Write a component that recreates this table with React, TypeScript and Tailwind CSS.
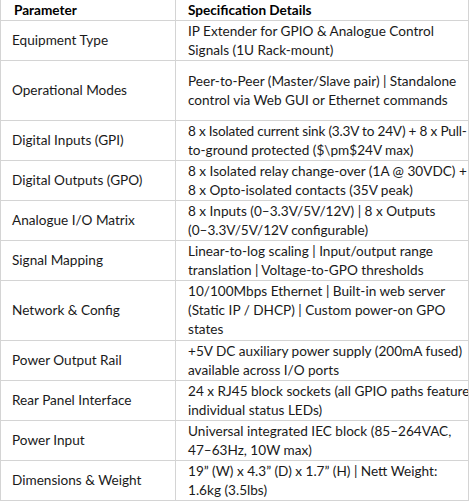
const rows: { name: string; lines: string[]; h: string }[] = [
  { name: "Equipment Type", lines: ["IP Extender for GPIO & Analogue Control", "Signals (1U Rack-mount)"], h: "h-[40px]" },
  { name: "Operational Modes", lines: ["Peer-to-Peer (Master/Slave pair) | Standalone", "control via Web GUI or Ethernet commands"], h: "h-[60px]" },
  { name: "Digital Inputs (GPI)", lines: ["8 x Isolated current sink (3.3V to 24V) + 8 x Pull-", "to-ground protected ($\\pm$24V max)"], h: "h-[40px]" },
  { name: "Digital Outputs (GPO)", lines: ["8 x Isolated relay change-over (1A @ 30VDC) +", "8 x Opto-isolated contacts (35V peak)"], h: "h-[40px]" },
  { name: "Analogue I/O Matrix", lines: ["8 x Inputs (0–3.3V/5V/12V) | 8 x Outputs", "(0–3.3V/5V/12V configurable)"], h: "h-[40px]" },
  { name: "Signal Mapping", lines: ["Linear-to-log scaling | Input/output range", "translation | Voltage-to-GPO thresholds"], h: "h-[40px]" },
  { name: "Network & Config", lines: ["10/100Mbps Ethernet | Built-in web server", "(Static IP / DHCP) | Custom power-on GPO", "states"], h: "h-[60px]" },
  { name: "Power Output Rail", lines: ["+5V DC auxiliary power supply (200mA fused)", "available across I/O ports"], h: "h-[40px]" },
  { name: "Rear Panel Interface", lines: ["24 x RJ45 block sockets (all GPIO paths feature", "individual status LEDs)"], h: "h-[40px]" },
  { name: "Power Input", lines: ["Universal integrated IEC block (85–264VAC,", "47–63Hz, 10W max)"], h: "h-[40px]" },
  { name: "Dimensions & Weight", lines: ["19” (W) x 4.3” (D) x 1.7” (H) | Nett Weight:", "1.6kg (3.5lbs)"], h: "h-[40px]" },
];

export default function App() {
  return (
    <div className="w-[469px] h-[501px] bg-white font-['Lato',sans-serif] text-[13.6px] leading-[19px] text-[#1a1a1a]">
      <div className="border-x border-[#d4d4d4]">
        <div className="flex h-[21px] border-b border-[#d4d4d4] font-bold text-black">
          <div className="w-[175px] shrink-0 border-r border-[#d4d4d4] pl-[13px] pt-[1px]">Parameter</div>
          <div className="flex-1 pl-[12px] pt-[1px]">Specification Details</div>
        </div>
        {rows.map((r) => (
          <div key={r.name} className={`flex border-b border-[#d4d4d4] ${r.h}`}>
            <div className="w-[175px] shrink-0 border-r border-[#d4d4d4] pl-[11px] flex items-center">{r.name}</div>
            <div className={`flex-1 min-w-0 overflow-hidden pl-[12px] whitespace-nowrap ${r.lines.length === 2 && r.h === "h-[60px]" ? "flex flex-col justify-center" : "pt-[1px]"}`}>
              {r.lines.map((l) => (
                <div key={l} className={l.length > 48 ? "tracking-[-0.2px]" : ""}>{l}</div>
              ))}
            </div>
          </div>
        ))}
      </div>
    </div>
  );
}
